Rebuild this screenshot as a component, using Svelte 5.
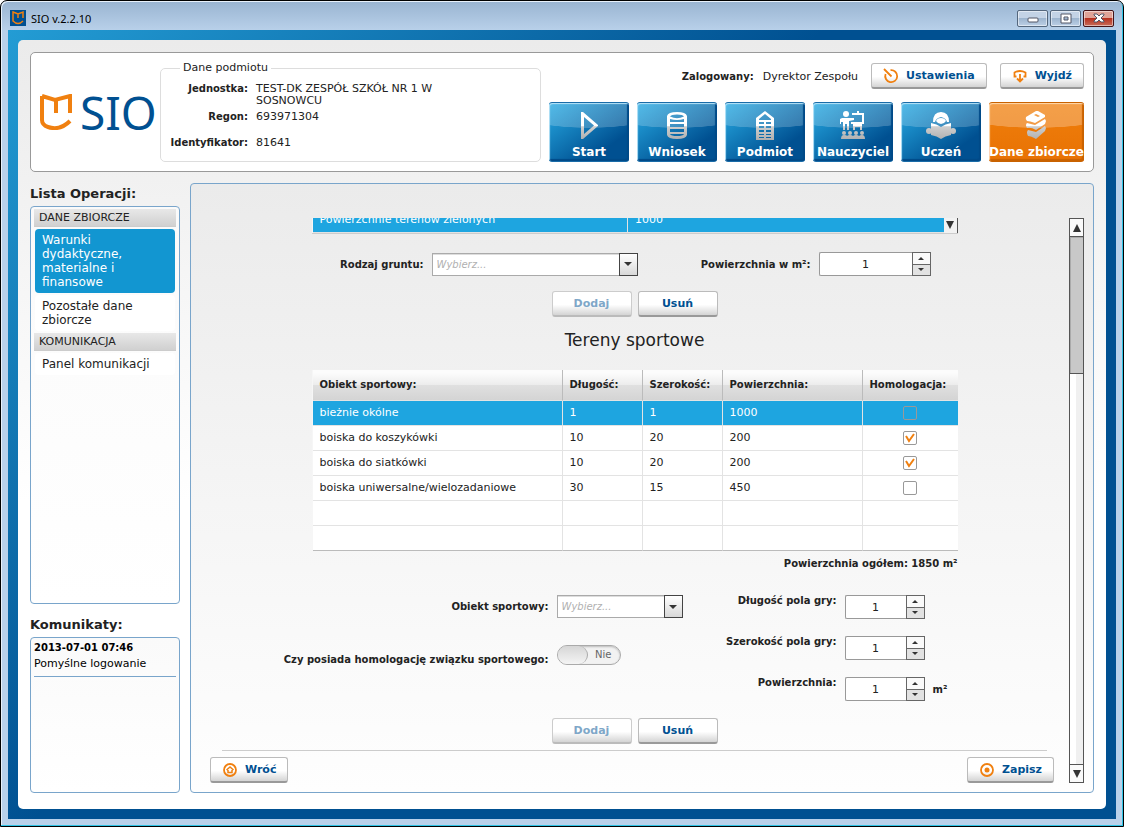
<script>
  const tabs = ['Start', 'Wniosek', 'Podmiot', 'Nauczyciel', 'Uczeń', 'Dane zbiorcze'];
  let activeTab = $state('Dane zbiorcze');

  const operations = [
    {
      title: 'DANE ZBIORCZE',
      items: ['Warunki dydaktyczne, materialne i finansowe', 'Pozostałe dane zbiorcze']
    },
    { title: 'KOMUNIKACJA', items: ['Panel komunikacji'] }
  ];
  let activeItem = $state(operations[0].items[0]);

  let objects = $state([
    { name: 'bieżnie okólne', length: 1, width: 1, area: 1000, approved: false },
    { name: 'boiska do koszykówki', length: 10, width: 20, area: 200, approved: true },
    { name: 'boiska do siatkówki', length: 10, width: 20, area: 200, approved: true },
    { name: 'boiska uniwersalne/wielozadaniowe', length: 30, width: 15, area: 450, approved: false }
  ]);
  let selected = $state(0);
  const total = $derived(objects.reduce((sum, o) => sum + o.area, 0));

  const form = $state({ groundArea: 1, length: 1, width: 1, area: 1 });
  let approved = $state(false);
</script>

{#snippet spinner(id, key)}
  <div class="spinner">
    <input {id} type="text" inputmode="numeric" bind:value={form[key]} />
    <div class="steps">
      <button type="button" aria-label="Zwiększ" onclick={() => (form[key] = Number(form[key]) + 1)}>
        <svg viewBox="0 0 6 3" width="6" height="3"><path d="M0 3L3 0L6 3z" /></svg>
      </button>
      <button type="button" aria-label="Zmniejsz" onclick={() => (form[key] = Number(form[key]) - 1)}>
        <svg viewBox="0 0 6 3" width="6" height="3"><path d="M0 0L3 3L6 0z" /></svg>
      </button>
    </div>
  </div>
{/snippet}

{#snippet choice(id, options)}
  <div class="choice">
    <select {id}>
      <option value="">Wybierz...</option>
      {#each options as option}
        <option>{option}</option>
      {/each}
    </select>
    <span class="choice-arrow">
      <svg viewBox="0 0 8 4" width="8" height="4"><path d="M0 0H8L4 4z" /></svg>
    </span>
  </div>
{/snippet}

{#snippet tabIcon(name)}
  <svg class="tab-icon" viewBox="0 0 32 32" width="32" height="32">
    <defs>
      <linearGradient id="icon-{name.slice(0, 3)}" gradientUnits="userSpaceOnUse" x1="0" y1="0" x2="0" y2="32">
        <stop offset="0.5" stop-color="#fff" />
        <stop offset="0.52" stop-color="#cfcfcf" />
        <stop offset="1" stop-color="#aaa" />
      </linearGradient>
    </defs>
    <g fill="url(#icon-{name.slice(0, 3)})" stroke="none">
      {#if name === 'Start'}
        <path fill-rule="evenodd" d="M8 2H10L25 15V16L10 29H8zM11 7V24L21 15.500z" />
      {:else if name === 'Wniosek'}
        <path
          fill-rule="evenodd"
          d="M6 6Q7 2 16 2T26 6V25Q25 29 16 29T6 25zM9 6.500Q16 10 23 6.500Q22 4.500 16 4.500T9 6.500zM9 9V12H23V9Q16 11 9 9zM9 14V17H23V14zM9 19V22H23V19zM9 24Q10 26 16 26T23 24z"
        />
      {:else if name === 'Podmiot'}
        <path
          fill-rule="evenodd"
          d="M16 1L25 8V30H7V8zM16 4L10 9V10H22V9zM10 12V14H15V12zM17 12V14H22V12zM10 16V18H15V16zM17 16V18H22V16zM10 20V22H15V20zM17 20V22H22V20zM10 24V25H15V24zM17 24V25H22V24zM10 27V28H15V27zM17 27V28H22V27z"
        />
      {:else if name === 'Nauczyciel'}
        <circle cx="9" cy="4" r="3" />
        <path d="M5 8H12L17 8V10L12 11V20H10V14H8V20H6V12H4V14H3V9z" />
        <path fill-rule="evenodd" d="M15 3H20V1H22V3H27V14H25V20H23V17H18V20H16V14H14V12H25V5H15z" />
        <circle cx="7" cy="23" r="2" />
        <circle cx="13" cy="23" r="2" />
        <circle cx="19" cy="23" r="2" />
        <circle cx="25" cy="23" r="2" />
        <path d="M4 29Q4 25 7 25T10 26Q11 25 13 25T16 26Q17 25 19 25T22 26Q23 25 25 25Q28 25 28 29z" />
      {:else if name === 'Uczeń'}
        <path d="M16 2Q24 2 24 12H22Q21 8 16 7Q11 8 10 12H8Q8 2 16 2z" />
        <path d="M11 11Q12 8 16 8T21 11Q19 14 16 14T11 11z" />
        <path d="M6 13Q12 14 16 17Q20 14 26 13V25Q20 26 16 29Q12 26 6 25z" />
        <circle cx="4" cy="21" r="3" />
        <circle cx="28" cy="21" r="3" />
      {:else}
        <path fill-rule="evenodd" d="M6 7L16 1H18L25 5V7L15 13Q10 11 7 11Q5 9 6 7zM14 5L18 7L20 6L16 4z" />
        <path d="M7 13L15 15L25 9L26 11L25 14L16 20Q11 17 7 18Q5 15 7 13z" />
        <path d="M8 20Q12 21 16 22L25 16L26 18L25 21L16 29Q11 26 8 26Q6 22 8 20z" />
      {/if}
    </g>
  </svg>
{/snippet}

<div class="window">
  <div class="title-bar">
    <svg class="app-icon" viewBox="0 0 16 16" width="16" height="16">
      <rect width="16" height="16" fill="#005091" />
      <path d="M6 3L3 2V11Q8 16 13 11M3 2L8 4L13 2V8M8 4V8" fill="none" stroke="#f08010" stroke-width="1.500" />
    </svg>
    <span class="title">SIO v.2.2.10</span>
    <div class="window-buttons">
      <button type="button" aria-label="Minimalizuj">
        <svg viewBox="0 0 16 12" width="16" height="12">
          <rect x="3" y="6" width="10" height="4" rx="1" fill="#fff" stroke="#535666" />
        </svg>
      </button>
      <button type="button" aria-label="Maksymalizuj">
        <svg viewBox="0 0 16 12" width="16" height="12">
          <path d="M3 2H13V11H3zM6 5V8H10V5z" fill="#fff" fill-rule="evenodd" stroke="#535666" />
        </svg>
      </button>
      <button type="button" class="close" aria-label="Zamknij">
        <svg viewBox="0 0 16 12" width="16" height="12">
          <path
            d="M3 2H6L8 4L10 2H13V3L10 6L13 9V10H10L8 8L6 10H3V9L6 6L3 3z"
            fill="#fff"
            stroke="#535666"
          />
        </svg>
      </button>
    </div>
  </div>

  <div class="backdrop">
    <div class="page">
      <header>
        <div class="logo">
          <svg viewBox="0 0 32 36" width="32" height="36">
            <path
              d="M2 2V26Q2 31 8 33Q20 37 30 27M2 2L15 6L30 2V19M16 6V19"
              fill="none"
              stroke="#f08010"
              stroke-width="4"
            />
          </svg>
          <span>SIO</span>
        </div>
        <fieldset>
          <legend>Dane podmiotu</legend>
          <dl>
            <dt>Jednostka:</dt>
            <dd>TEST-DK ZESPÓŁ SZKÓŁ NR 1 W SOSNOWCU</dd>
            <dt>Regon:</dt>
            <dd>693971304</dd>
            <dt class="last">Identyfikator:</dt>
            <dd class="last">81641</dd>
          </dl>
        </fieldset>
        <div class="header-right">
          <div class="account">
            <b>Zalogowany:</b>
            <span>Dyrektor Zespołu</span>
            <button type="button" class="btn">
              <svg viewBox="0 0 16 16" width="16" height="16" fill="none" stroke="#f08010" stroke-width="1.800">
                <path d="M7.500 2.200A6 6 0 1 1 2.600 6M1 1L8.500 8.500" />
              </svg>
              Ustawienia
            </button>
            <button type="button" class="btn">
              <svg viewBox="0 0 16 16" width="16" height="16" fill="none" stroke="#f08010" stroke-width="1.800">
                <path d="M4.500 8.500H2.500V4.500Q8 1.500 13.500 4.500V8.500H11.500M8 6V13M5 10.500L8 13.500L11 10.500" />
              </svg>
              Wyjdź
            </button>
          </div>
          <nav>
            {#each tabs as tab}
              <button type="button" class="tab" class:active={tab === activeTab} onclick={() => (activeTab = tab)}>
                {@render tabIcon(tab)}
                <span>{tab}</span>
              </button>
            {/each}
          </nav>
        </div>
      </header>

      <div class="body">
        <aside>
          <h2>Lista Operacji:</h2>
          <div class="box operations">
            {#each operations as group}
              <h3>{group.title}</h3>
              {#each group.items as item}
                <button
                  type="button"
                  class="operation"
                  class:active={item === activeItem}
                  onclick={() => (activeItem = item)}>{item}</button
                >
              {/each}
            {/each}
          </div>
          <h2>Komunikaty:</h2>
          <div class="box messages">
            <div class="message">
              <b>2013-07-01 07:46</b>
              <span>Pomyślne logowanie</span>
            </div>
          </div>
        </aside>

        <main>
          <div class="content">
            <div class="scroll-area">
              <div class="grounds">
                <table>
                  <tbody>
                    <tr class="selected">
                      <td>Powierzchnie terenów zielonych</td>
                      <td>1000</td>
                    </tr>
                  </tbody>
                </table>
                <button type="button" aria-label="Przewiń w dół">
                  <svg viewBox="0 0 8 8" width="8" height="8"><path d="M0 0H8L4 8z" /></svg>
                </button>
              </div>

              <div class="ground-form">
                <label for="ground">Rodzaj gruntu:</label>
                {@render choice('ground', ['Tereny zielone', 'Drogi', 'Place'])}
                <label for="ground-area">Powierzchnia w m²:</label>
                {@render spinner('ground-area', 'groundArea')}
              </div>

              <div class="actions">
                <button type="button" class="btn" disabled>Dodaj</button>
                <button type="button" class="btn">Usuń</button>
              </div>

              <h1>Tereny sportowe</h1>

              <table class="objects">
                <colgroup>
                  <col class="c-name" />
                  <col class="c-size" />
                  <col class="c-size" />
                  <col class="c-area" />
                  <col class="c-check" />
                </colgroup>
                <thead>
                  <tr>
                    <th>Obiekt sportowy:</th>
                    <th>Długość:</th>
                    <th>Szerokość:</th>
                    <th>Powierzchnia:</th>
                    <th>Homologacja:</th>
                  </tr>
                </thead>
                <tbody>
                  {#each objects as object, i}
                    <tr class:selected={i === selected} onclick={() => (selected = i)}>
                      <td>{object.name}</td>
                      <td>{object.length}</td>
                      <td>{object.width}</td>
                      <td>{object.area}</td>
                      <td class="check">
                        <input type="checkbox" aria-label="Homologacja" bind:checked={object.approved} />
                      </td>
                    </tr>
                  {/each}
                  {#each [0, 1] as _}
                    <tr><td></td><td></td><td></td><td></td><td></td></tr>
                  {/each}
                </tbody>
              </table>

              <p class="total">Powierzchnia ogółem: {total} m²</p>

              <div class="object-form">
                <div class="fields">
                  <label for="object">Obiekt sportowy:</label>
                  {@render choice('object', objects.map((o) => o.name))}
                  <label for="approved" class="low">Czy posiada homologację związku sportowego:</label>
                  <div class="toggle">
                    <input id="approved" type="checkbox" role="switch" bind:checked={approved} />
                    <span>{approved ? 'Tak' : 'Nie'}</span>
                  </div>
                </div>
                <div class="fields sizes">
                  <label for="length">Długość pola gry:</label>
                  {@render spinner('length', 'length')}
                  <span></span>
                  <label for="width">Szerokość pola gry:</label>
                  {@render spinner('width', 'width')}
                  <span></span>
                  <label for="area">Powierzchnia:</label>
                  {@render spinner('area', 'area')}
                  <b>m²</b>
                </div>
              </div>

              <div class="actions">
                <button type="button" class="btn" disabled>Dodaj</button>
                <button type="button" class="btn">Usuń</button>
              </div>
            </div>

            <footer>
              <button type="button" class="btn">
                <svg viewBox="0 0 16 16" width="16" height="16" fill="none" stroke="#f08010" stroke-width="1.800">
                  <circle cx="8" cy="8" r="6" />
                  <path d="M4.500 8L8 5L11.500 8M6 8V10.500H10V8" stroke-width="1.500" />
                </svg>
                Wróć
              </button>
              <button type="button" class="btn">
                <svg viewBox="0 0 16 16" width="16" height="16">
                  <circle cx="8" cy="8" r="6" fill="none" stroke="#f08010" stroke-width="1.800" />
                  <circle cx="8" cy="8" r="2.500" fill="#f08010" />
                </svg>
                Zapisz
              </button>
            </footer>
          </div>

          <div class="scrollbar">
            <button type="button" aria-label="W górę">
              <svg viewBox="0 0 8 8" width="8" height="8"><path d="M4 0L8 8H0z" /></svg>
            </button>
            <div class="track"><div class="thumb"></div></div>
            <button type="button" aria-label="W dół">
              <svg viewBox="0 0 8 8" width="8" height="8"><path d="M0 0H8L4 8z" /></svg>
            </button>
          </div>
        </main>
      </div>
    </div>
  </div>
</div>

<style>
  .window {
    box-sizing: border-box;
    min-height: 100vh;
    display: flex;
    flex-direction: column;
    padding: 0 7px 7px;
    border: 1px solid #000;
    border-radius: 7px 7px 0 0;
    background: linear-gradient(#99b4d1, #b9d1ea 30px);
    box-shadow: inset -1px -1px 0 #2fc4e6, inset 1px 1px 0 #e8f1fb;
    font-family: Verdana, 'DejaVu Sans', sans-serif;
    font-size: 11px;
    color: #222;
  }

  .window *,
  .window *::before,
  .window *::after {
    box-sizing: border-box;
  }

  button,
  input,
  select {
    font: inherit;
    color: inherit;
    margin: 0;
    padding: 0;
  }

  b,
  dt,
  th,
  label,
  .total {
    font-size: 10px;
    font-weight: bold;
  }

  .title-bar {
    display: flex;
    align-items: center;
    height: 29px;
    padding: 5px 2px 0;
  }

  .title {
    flex: 1;
    margin-left: 5px;
    font-family: Tahoma, 'Noto Sans', sans-serif;
    font-size: 11px;
    color: #000;
  }

  .window-buttons {
    display: flex;
    gap: 2px;
  }

  .window-buttons button {
    display: flex;
    align-items: center;
    justify-content: center;
    width: 31px;
    height: 17px;
    border: 1px solid #54677d;
    border-radius: 2px;
    background: linear-gradient(#c3d3e6 50%, #9db5cf 50%, #bdd0e6);
    box-shadow: inset 0 0 0 1px rgba(255, 255, 255, 0.5);
  }

  .window-buttons .close {
    border-color: #431418;
    background: linear-gradient(#e0a397 50%, #b7311f 50%, #c86d5a);
  }

  .backdrop {
    flex: 1;
    display: flex;
    padding: 10px;
    background: linear-gradient(135deg, #239cd4, #005091 43%);
  }

  .page {
    flex: 1;
    display: flex;
    flex-direction: column;
    min-width: 0;
    padding: 12px 12px 16px;
    border-radius: 5px;
    background: linear-gradient(#ebebeb, #fff 60%);
  }

  header {
    display: flex;
    min-height: 120px;
    padding: 9px;
    border: 1px solid #999;
    border-radius: 5px;
    background: #fff;
  }

  .logo {
    display: flex;
    align-items: center;
    align-self: center;
    gap: 8px;
    width: 120px;
  }

  .logo span {
    font-family: 'Noto Sans', sans-serif;
    font-size: 46px;
    line-height: 44px;
    color: #005091;
  }

  fieldset {
    flex: 0 1 381px;
    min-width: 0;
    margin: 0;
    padding: 9px 5px 4px;
    border: 1px solid #ddd;
    border-radius: 5px;
  }

  legend {
    margin-left: 14px;
    padding: 0 3px;
    font-size: 11px;
    line-height: 12px;
  }

  dl {
    display: grid;
    grid-template-columns: 82px minmax(0, 200px);
    gap: 4px 8px;
    margin: 0;
    line-height: 12px;
  }

  dt {
    text-align: right;
    white-space: nowrap;
  }

  dd {
    margin: 0;
  }

  dl .last {
    margin-top: 10px;
  }

  .header-right {
    flex: 1;
    display: flex;
    flex-direction: column;
    align-items: flex-end;
    gap: 13px;
  }

  .account {
    display: flex;
    align-items: center;
    padding-top: 1px;
  }

  .account span {
    margin: 0 13px 0 9px;
  }

  .account .btn + .btn {
    margin-left: 13px;
  }

  .btn {
    display: flex;
    align-items: center;
    justify-content: center;
    gap: 7px;
    height: 26px;
    padding: 0 11px;
    border: 1px solid #bbb;
    border-bottom: 2px solid #999;
    border-radius: 3px;
    background: linear-gradient(#fff 55%, #d4d4d4);
    font-size: 11px;
    font-weight: bold;
    color: #005091;
    white-space: nowrap;
  }

  .btn:disabled {
    border-color: #ccc;
    border-bottom-color: #bbb;
    color: #7fa7c8;
  }

  nav {
    display: flex;
    gap: 8px;
  }

  .tab {
    display: flex;
    flex-direction: column;
    align-items: center;
    min-width: 80px;
    height: 60px;
    padding: 7px 0 0;
    border: 1px solid #1a6ca8;
    border-width: 1px 0;
    border-radius: 3px;
    background:
      radial-gradient(90px 25px at 50% 0, rgba(255, 255, 255, 0.2) 98%, transparent),
      linear-gradient(145deg, #27abe4, #005091 75%);
    box-shadow: inset 1px 1px 1px #b9e4f8, inset -2px -2px 1px #004a88;
    font-size: 12px;
    font-weight: bold;
    color: #fff;
  }

  .tab.active {
    border-color: #c96200;
    background:
      radial-gradient(100px 25px at 50% 0, rgba(255, 255, 255, 0.25) 98%, transparent),
      linear-gradient(#f07f0c, #e87204);
    box-shadow: inset 1px 1px 1px #ffd9ad, inset -2px -2px 1px #c96200;
  }

  .tab span {
    line-height: 20px;
    white-space: nowrap;
  }

  .tab-icon {
    flex: none;
  }

  .body {
    flex: 1;
    display: flex;
    gap: 10px;
    margin-top: 11px;
  }

  aside {
    flex: 0 0 150px;
    display: flex;
    flex-direction: column;
  }

  h2 {
    margin: 0;
    padding: 3px 0 4px;
    font-size: 13px;
    line-height: 16px;
  }

  .box {
    padding: 2px 3px;
    border: 1px solid #79a5cb;
    border-radius: 4px;
    background: linear-gradient(#fafafa, #fff);
  }

  .operations {
    flex: 1;
    margin-bottom: 10px;
  }

  .messages {
    min-height: 156px;
    color: #000;
  }

  .message {
    display: flex;
    flex-direction: column;
    padding-bottom: 4px;
    border-bottom: 1px solid #79a5cb;
    line-height: 16px;
  }

  h3 {
    margin: 0 0 2px;
    padding: 0 5px;
    border-bottom: 1px solid #ccc;
    background: linear-gradient(#e8e8e8, #d0d0d0);
    font-size: 11px;
    font-weight: normal;
    line-height: 17px;
  }

  .operation {
    display: block;
    width: calc(100% - 2px);
    margin: 0 1px 2px;
    padding: 4px 7px;
    border: none;
    border-radius: 4px;
    background: #fff;
    font-size: 12px;
    line-height: 14px;
    text-align: left;
  }

  .operation.active {
    background: #1296d1;
    color: #fff;
  }

  main {
    flex: 1;
    display: flex;
    gap: 10px;
    min-width: 0;
    padding: 34px 9px 9px 19px;
    border: 1px solid #79a5cb;
    border-radius: 4px;
    background: linear-gradient(#ebebeb, #fefefe);
  }

  .content {
    flex: 1;
    display: flex;
    flex-direction: column;
    min-width: 0;
  }

  .scroll-area {
    flex: 1;
    display: flex;
    flex-direction: column;
    align-items: center;
  }

  .grounds {
    display: flex;
    align-items: flex-end;
    width: 646px;
    max-width: 100%;
    height: 16px;
    overflow: hidden;
    border-bottom: 1px solid #ccc;
  }

  .grounds table {
    width: 100%;
    min-width: 0;
  }

  .grounds button {
    flex: none;
    width: 14px;
    height: 15px;
    border: none;
    border-right: 1px solid #555;
    background: #f2f2f2;
  }

  table {
    flex: 1;
    border-left: 1px solid #f6f6f6;
    border-spacing: 0;
    table-layout: fixed;
  }

  td,
  th {
    height: 25px;
    padding: 0 7px;
    border-right: 1px solid #e3e3e3;
    border-bottom: 1px solid #e3e3e3;
    background: #fff;
    line-height: 14px;
    text-align: left;
  }

  td:last-child,
  th:last-child {
    border-right: none;
  }

  .objects tr:last-child td {
    border-bottom-color: #bbb;
  }

  .selected td {
    background: #1ea5e0;
    color: #fff;
  }

  .ground-form {
    display: grid;
    grid-template-columns: 112px 206px 1fr 112px;
    gap: 8px;
    align-items: center;
    width: 646px;
    max-width: 100%;
    margin-top: 18px;
    padding-right: 27px;
  }

  label {
    text-align: right;
  }

  .choice {
    position: relative;
    height: 23px;
  }

  .choice select {
    appearance: none;
    width: 100%;
    height: 100%;
    padding: 0 20px 0 4px;
    border: 1px solid #aaa;
    border-radius: 0;
    background: #fff;
    box-shadow: inset 0 1px 0 #ddd;
    font-size: 10px;
    font-style: italic;
    color: #b0b0b0;
  }

  .choice-arrow {
    position: absolute;
    top: 0;
    right: 0;
    bottom: 0;
    display: flex;
    align-items: center;
    justify-content: center;
    width: 19px;
    border: 1px solid #444;
    background: linear-gradient(#fff, #d8d8d8);
    pointer-events: none;
  }

  .spinner {
    display: flex;
    height: 24px;
  }

  .spinner input {
    flex: 1;
    min-width: 0;
    border: 1px solid #999;
    border-right: none;
    border-radius: 2px 0 0 2px;
    background: #fff;
    text-align: center;
  }

  .steps {
    display: grid;
    grid-template-rows: 1fr 1fr;
    width: 19px;
    border: 1px solid #666;
    background: #666;
    gap: 1px;
  }

  .steps button {
    display: flex;
    align-items: center;
    justify-content: center;
    border: none;
    background: #fafafa;
  }

  .steps button:last-child {
    background: #e2e2e2;
  }

  .actions {
    display: flex;
    justify-content: center;
    gap: 6px;
    margin-top: 15px;
  }

  .object-form + .actions {
    margin-top: 17px;
  }

  .actions .btn {
    width: 80px;
  }

  h1 {
    margin: 13px 0 20px;
    font-size: 17px;
    font-weight: normal;
    line-height: 20px;
  }

  .objects {
    flex: none;
    width: 646px;
    max-width: 100%;
  }

  .c-name {
    width: 250px;
  }

  .c-size {
    width: 80px;
  }

  .c-area {
    width: 140px;
  }

  .c-check {
    width: 95px;
  }

  th {
    height: 31px;
    border-right-color: #bbb;
    background: linear-gradient(#fcfcfc 10%, #ececec 50%, #e0e0e0 50%, #d4d4d4);
  }

  .check {
    padding: 0;
    text-align: center;
  }

  .check input {
    appearance: none;
    display: block;
    width: 14px;
    height: 14px;
    margin: 0 auto;
    border: 1px solid #999;
    border-radius: 2px;
  }

  .check input:checked {
    background: url("data:image/svg+xml,%3Csvg xmlns='http://www.w3.org/2000/svg' viewBox='0 0 12 12'%3E%3Cpath d='M2 4L5 9L10 2' fill='none' stroke='%23f08010' stroke-width='2'/%3E%3C/svg%3E");
  }

  .total {
    width: 646px;
    max-width: 100%;
    margin: 5px 0 0;
    line-height: 16px;
    text-align: right;
  }

  .object-form {
    display: flex;
    justify-content: space-between;
    align-items: flex-start;
    width: 702px;
    max-width: 100%;
    margin-top: 23px;
  }

  .fields {
    display: grid;
    grid-template-columns: 265px 126px;
    gap: 27px 8px;
    align-items: center;
  }

  .fields label {
    white-space: nowrap;
  }

  .fields .low {
    align-self: end;
  }

  .sizes {
    grid-template-columns: 112px 80px 53px;
    gap: 17px 8px;
  }

  .sizes label {
    align-self: start;
  }

  .toggle {
    position: relative;
    width: 64px;
    height: 20px;
  }

  .toggle input {
    appearance: none;
    display: block;
    width: 64px;
    height: 20px;
    border: 1px solid #aaa;
    border-radius: 10px;
    background: #f2f2f2;
    box-shadow: inset 0 1px 2px #bbb;
  }

  .toggle input::before {
    content: '';
    display: block;
    width: 30px;
    height: 18px;
    border-right: 1px solid #aaa;
    border-radius: 9px;
    background: linear-gradient(#d6d6d6, #f4f4f4);
  }

  .toggle input:checked::before {
    margin-left: 32px;
  }

  .toggle span {
    position: absolute;
    top: 0;
    right: 9px;
    font-size: 10px;
    line-height: 20px;
    color: #666;
    pointer-events: none;
  }

  .toggle input:checked + span {
    right: auto;
    left: 9px;
  }

  footer {
    display: flex;
    justify-content: space-between;
    margin-top: 6px;
    padding: 7px 5px 0 0;
    background: linear-gradient(#ccc, #ccc) center top / calc(100% - 24px) 1px no-repeat;
  }

  .scrollbar {
    display: flex;
    flex-direction: column;
    width: 15px;
    border: 1px solid #555;
    background: linear-gradient(90deg, #fff 50%, #f0f0f0 50%);
  }

  .scrollbar button {
    display: flex;
    align-items: center;
    justify-content: center;
    height: 17px;
    border: none;
    background: #fafafa;
  }

  .track {
    flex: 1;
    border: solid #555;
    border-width: 1px 0;
  }

  .thumb {
    height: 26%;
    border-bottom: 1px solid #555;
    background: #c8c8c8;
    box-shadow: inset 1px 1px 0 #aaa;
  }

  svg {
    flex: none;
  }

  .scrollbar svg,
  .steps svg,
  .choice svg,
  .grounds svg {
    fill: #333;
  }
</style>
